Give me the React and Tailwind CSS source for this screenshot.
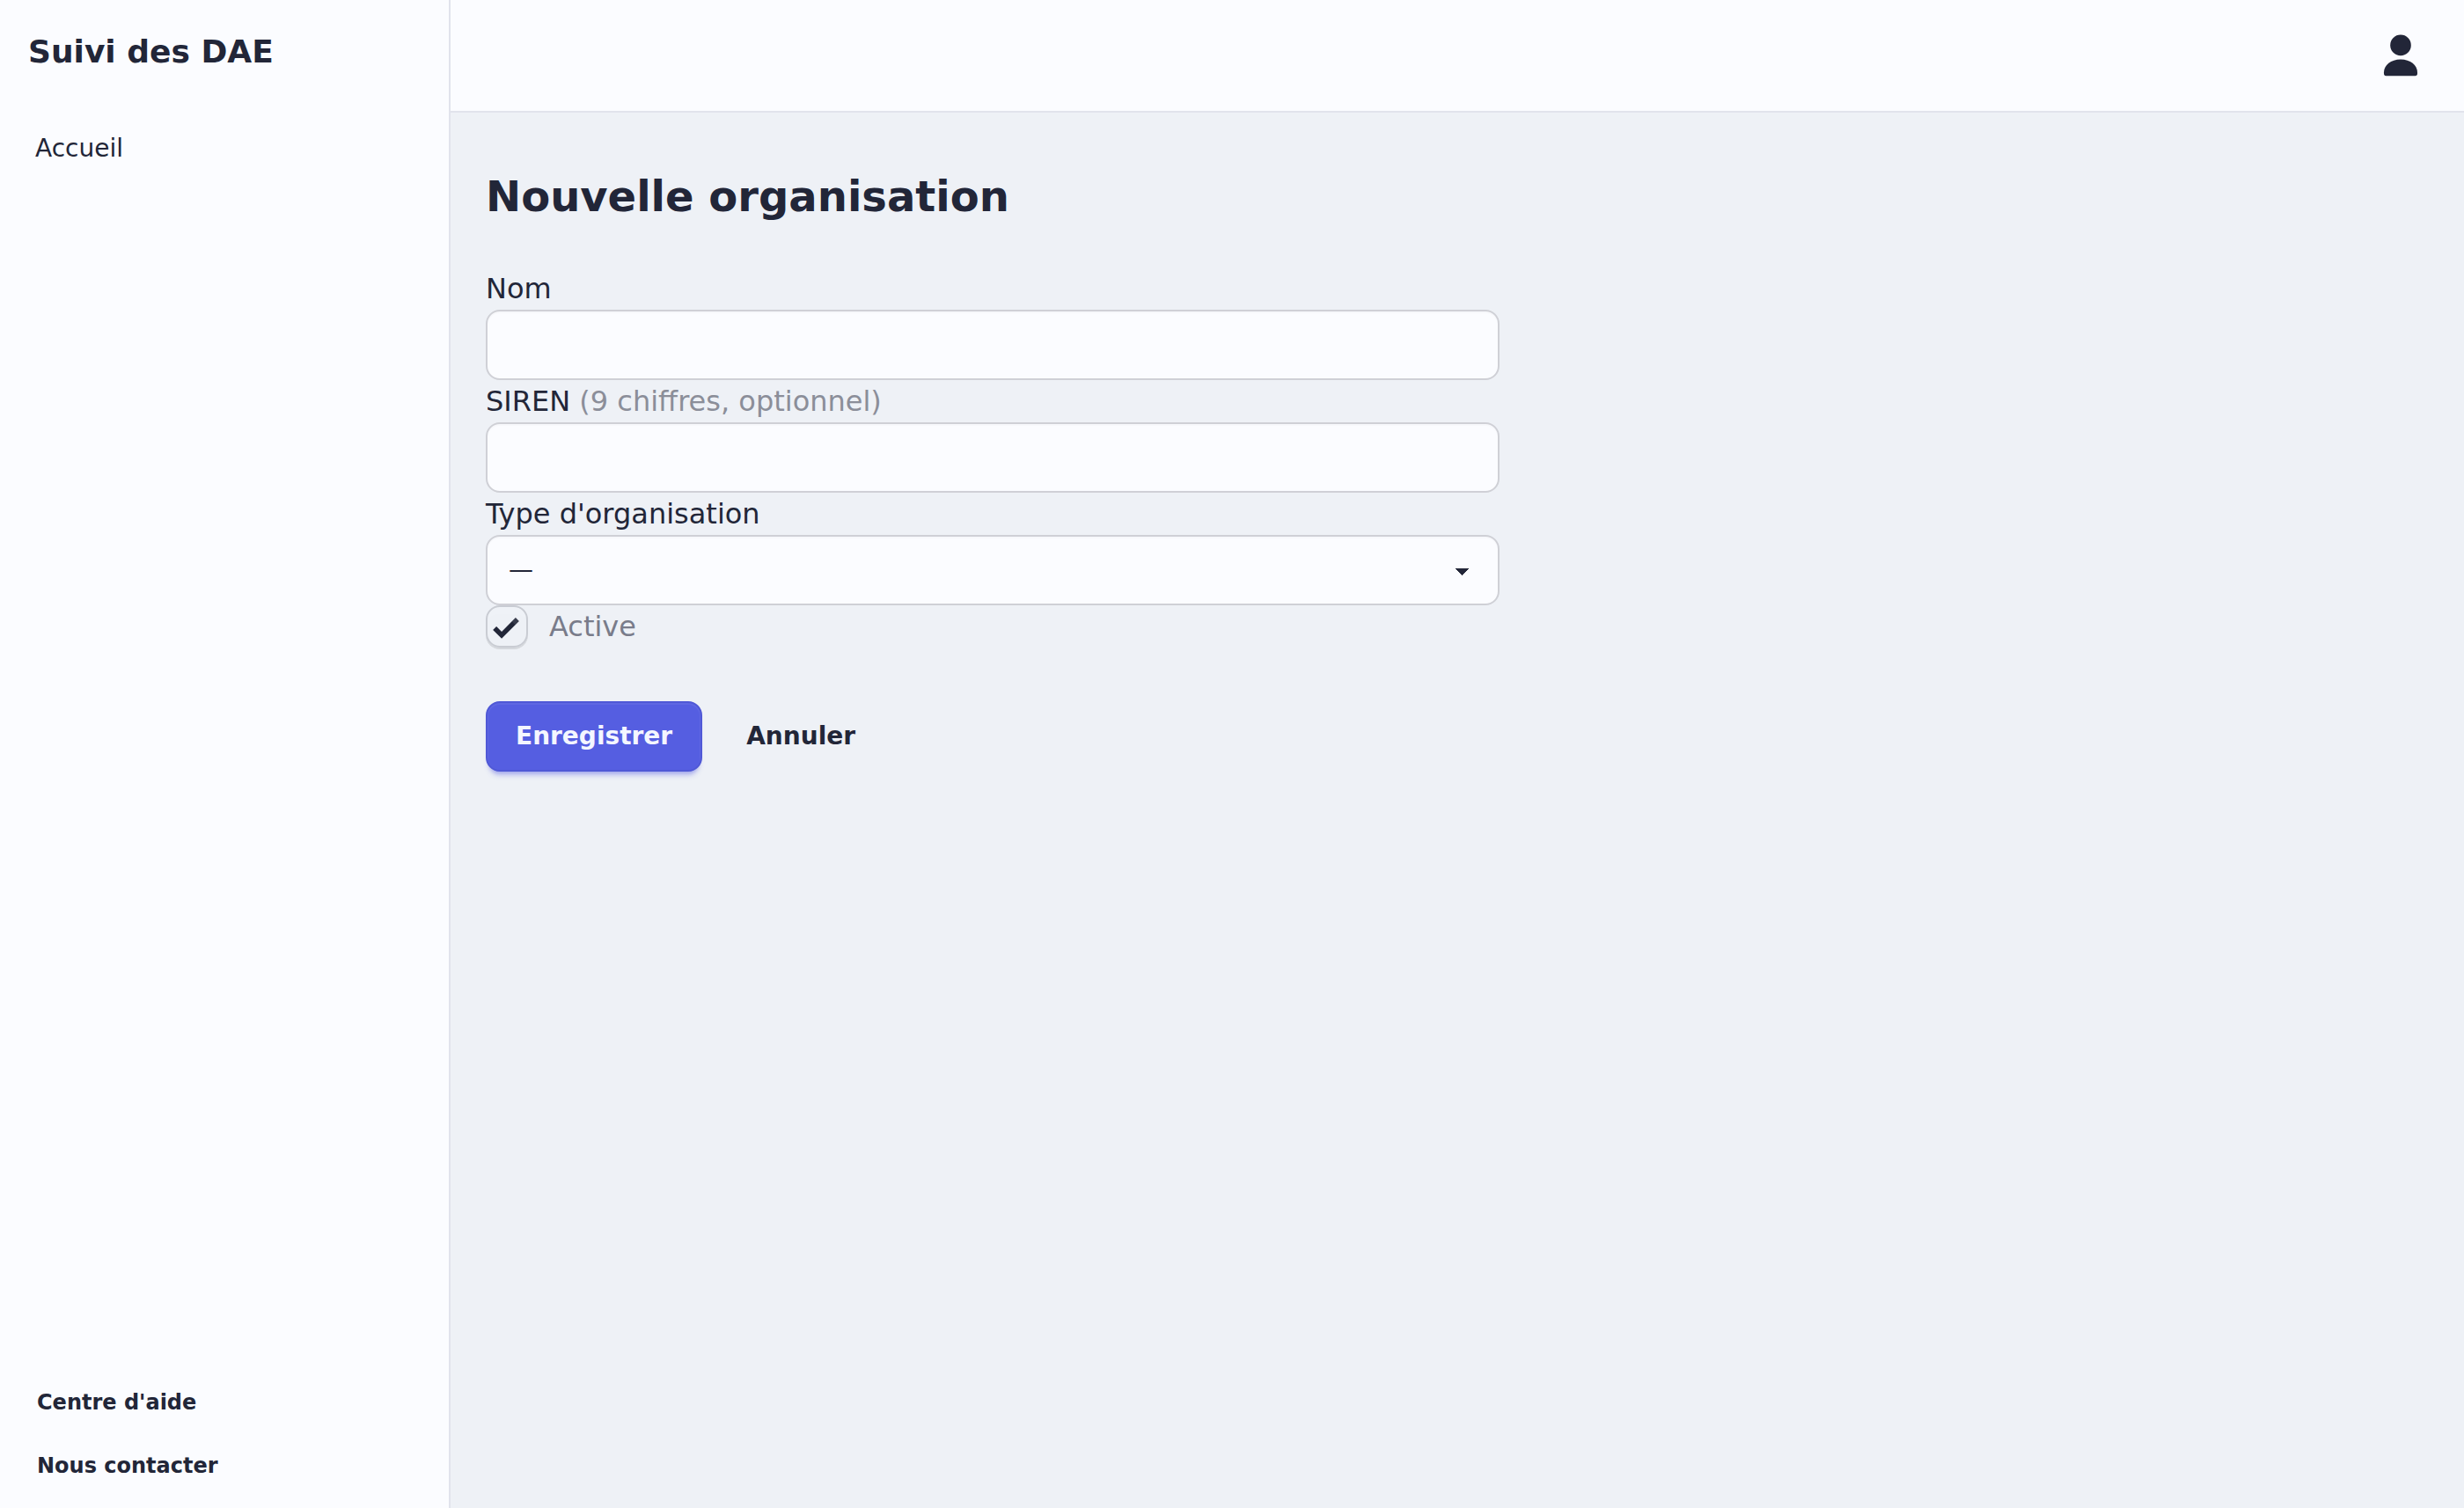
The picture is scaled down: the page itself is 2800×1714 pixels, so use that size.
import React, { useState } from 'react';

const navLinks = [{ label: 'Accueil', href: '#' }];

const helpLinks = [
  { label: "Centre d'aide", href: '#' },
  { label: 'Nous contacter', href: '#' },
];

const fieldClass =
  'block h-20 w-full rounded-2xl border-2 border-[#cfd0d6] bg-[#fbfcff] px-6 text-[28px] shadow-[inset_0_2px_0_rgba(34,38,56,0.02)] outline-none';

const UserIcon = () => (
  <svg width="56" height="56" viewBox="0 0 56 56" fill="currentColor" aria-hidden="true">
    <circle cx="28" cy="15.4" r="11.8" />
    <path d="M9 46.2C9 38.2 17 31.6 28 31.6S47 38.2 47 46.2V47.6Q47 50.3 44.6 50.3H11.4Q9 50.3 9 47.6Z" />
  </svg>
);

const CheckIcon = () => (
  <svg width="28" height="28" viewBox="0 0 28 28" className="rotate-45 overflow-visible" aria-hidden="true">
    <path d="M5.6 28V22.4H14V0H19.6V28Z" fill="currentColor" />
    <path d="M14 0H19.6V6H14Z" fill="#fff" fillOpacity="0.1" />
  </svg>
);

const Sidebar = () => (
  <aside className="flex w-[512px] shrink-0 flex-col border-r-2 border-[#e1e3ec] bg-[#fbfcff]">
    <div className="px-8 pt-8 text-[36px] leading-[54px] font-bold">Suivi des DAE</div>
    <nav className="px-4 pt-[62px]">
      {navLinks.map((link) => (
        <a key={link.label} href={link.href} className="block px-6 text-[28px] leading-[41px]">
          {link.label}
        </a>
      ))}
    </nav>
    <div className="mt-auto flex flex-col gap-2 px-4 pb-4">
      {helpLinks.map((link) => (
        <a key={link.label} href={link.href} className="flex h-16 items-center px-[26px] text-2xl font-bold">
          {link.label}
        </a>
      ))}
    </div>
  </aside>
);

const OrganisationForm = () => {
  const [active, setActive] = useState(true);

  return (
    <form className="w-[1152px] text-[32px] leading-[48px]" onSubmit={(e) => e.preventDefault()}>
      <label htmlFor="nom" className="block">Nom</label>
      <input id="nom" type="text" className={fieldClass} />

      <label htmlFor="siren" className="block">
        SIREN <span className="text-[#8b8e99]">(9 chiffres, optionnel)</span>
      </label>
      <input id="siren" type="text" className={fieldClass} />

      <div>Type d'organisation</div>
      <button type="button" className={fieldClass}>
        <span className="flex items-center justify-between pr-[9px]">
          <span>—</span>
          <svg
            width="15"
            height="8"
            viewBox="0 0 15 8"
            shapeRendering="crispEdges"
            className="translate-y-0.5"
            aria-hidden="true"
          >
            <path d="M0 0H15L7.5 8Z" fill="currentColor" />
          </svg>
        </span>
      </button>

      <div className="flex items-center">
        <button
          type="button"
          role="checkbox"
          aria-checked={active}
          aria-label="Active"
          onClick={() => setActive(!active)}
          className="flex size-12 items-center justify-center rounded-2xl border-2 border-[#c9ccd3] shadow-[inset_0_16px_0_-8px_rgba(255,255,255,0.1),0_2px_0_rgba(0,0,0,0.1)]"
        >
          {active && <CheckIcon />}
        </button>
        <span className="ml-6 text-[#797c8a]">Active</span>
      </div>

      <div className="mt-[61px] flex gap-4 text-[28px] font-bold">
        <button
          type="submit"
          className="h-20 rounded-2xl border-2 border-[#4f58d6] bg-[#555ee1] px-8 text-[#f4f6ff] shadow-[inset_0_1px_0_1px_rgba(255,255,255,0.06),0_6px_4px_-4px_rgba(85,94,225,0.3),0_8px_6px_-4px_rgba(85,94,225,0.3)]"
        >
          Enregistrer
        </button>
        <button type="button" className="h-20 px-[34px]">Annuler</button>
      </div>
    </form>
  );
};

export default function App() {
  return (
    <div className="flex h-screen bg-[#eef1f6] font-['DejaVu_Sans',sans-serif] text-[#222638]">
      <Sidebar />
      <div className="flex flex-1 flex-col">
        <header className="flex h-32 items-center justify-end border-b-2 border-[#e1e3ec] bg-[#fbfcff] pt-0.5 pr-11">
          <button type="button" aria-label="Profil">
            <UserIcon />
          </button>
        </header>
        <main className="flex-1 px-10 pt-16">
          <h1 className="mb-[50px] text-5xl leading-[62px] font-bold">Nouvelle organisation</h1>
          <OrganisationForm />
        </main>
      </div>
    </div>
  );
}
